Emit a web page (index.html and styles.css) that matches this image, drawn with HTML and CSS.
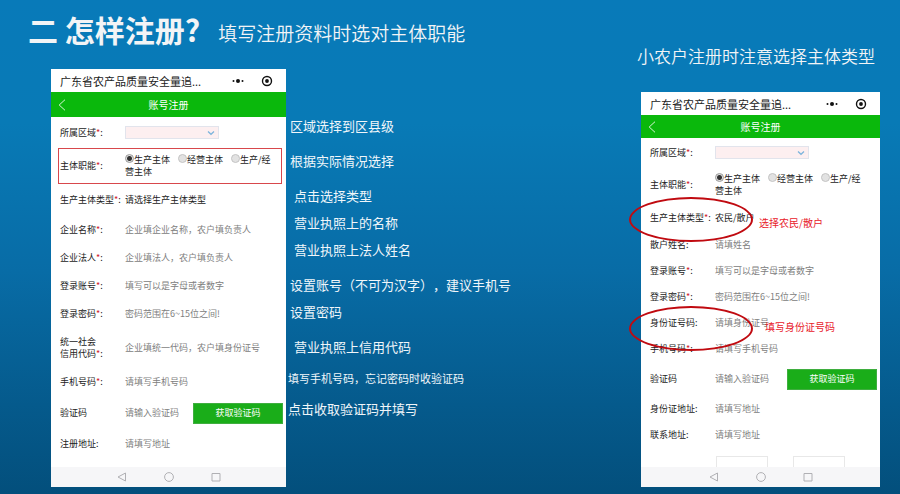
FILE: index.html
```html
<!DOCTYPE html>
<html lang="zh-CN">
<head>
    <meta charset="UTF-8">
    <meta name="viewport" content="width=device-width, initial-scale=1.0">
    <title>怎样注册</title>
    <link rel="stylesheet" href="styles.css">
</head>
<body>
    <main class="slide">
        <section class="guide">
            <header class="heading">
                <h1>二 怎样注册?</h1>
                <p>填写注册资料时选对主体职能</p>
            </header>

            <div class="guide-body">
                <div class="phone">
                    <div class="status">
                        <span class="app-name">广东省农产品质量安全量追...</span>
                        <svg class="dots" viewBox="0 0 12 12"><circle cx="1.5" cy="6" r="1"/><circle cx="6" cy="6" r="2"/><circle cx="10.5" cy="6" r="1"/></svg>
                        <svg class="target" viewBox="0 0 12 12"><circle cx="6" cy="6" r="4.5" fill="none" stroke="#111" stroke-width="1.4"/><circle cx="6" cy="6" r="1.9"/></svg>
                    </div>
                    <div class="topbar">
                        <svg class="back" viewBox="0 0 8 12"><path d="M7 .7 1.2 6 7 11.3"/></svg>
                        <h2>账号注册</h2>
                    </div>
                    <form class="form">
                        <div class="row row-area">
                            <label for="area1">所属区域<i>*</i>:</label>
                            <div class="picker">
                                <select id="area1"><option></option></select>
                                <svg viewBox="0 0 8 6"><path d="M1 1.5 4 4.3 7 1.5"/></svg>
                            </div>
                        </div>
                        <div class="row row-role marked">
                            <span class="label">主体职能<i>*</i>:</span>
                            <div class="radios">
                                <label><input type="radio" name="role1" checked>生产主体</label>
                                <label><input type="radio" name="role1">经营主体</label>
                                <label><input type="radio" name="role1">生产/经营主体</label>
                            </div>
                        </div>
                        <div class="row row-type">
                            <label for="type1">生产主体类型<i>*</i>:</label>
                            <select id="type1" class="plain"><option>请选择生产主体类型</option></select>
                        </div>
                        <div class="row">
                            <label for="company">企业名称<i>*</i>:</label>
                            <input type="text" id="company" placeholder="企业填企业名称，农户填负责人">
                        </div>
                        <div class="row">
                            <label for="legal">企业法人<i>*</i>:</label>
                            <input type="text" id="legal" placeholder="企业填法人，农户填负责人">
                        </div>
                        <div class="row">
                            <label for="account1">登录账号<i>*</i>:</label>
                            <input type="text" id="account1" placeholder="填写可以是字母或者数字">
                        </div>
                        <div class="row">
                            <label for="pwd1">登录密码<i>*</i>:</label>
                            <input type="password" id="pwd1" placeholder="密码范围在6~15位之间!">
                        </div>
                        <div class="row row-credit">
                            <label for="credit">统一社会<br>信用代码<i>*</i>:</label>
                            <input type="text" id="credit" placeholder="企业填统一代码，农户填身份证号">
                        </div>
                        <div class="row">
                            <label for="phone1">手机号码<i>*</i>:</label>
                            <input type="tel" id="phone1" placeholder="请填写手机号码">
                        </div>
                        <div class="row row-code">
                            <label for="code1">验证码</label>
                            <input type="text" id="code1" placeholder="请输入验证码">
                            <button type="button">获取验证码</button>
                        </div>
                        <div class="row">
                            <label for="address1">注册地址:</label>
                            <input type="text" id="address1" placeholder="请填写地址">
                        </div>
                    </form>
                    <div class="navbar">
                        <svg viewBox="0 0 10 10"><path d="M8.5 1v8L1 5z"/></svg>
                        <svg viewBox="0 0 10 10"><circle cx="5" cy="5" r="4.4"/></svg>
                        <svg viewBox="0 0 10 10"><path d="M1 1.5h8v7.5H1z"/></svg>
                    </div>
                </div>

                <ul class="notes">
                    <li>区域选择到区县级</li>
                    <li class="far">根据实际情况选择</li>
                    <li class="far indent">点击选择类型</li>
                    <li class="indent">营业执照上的名称</li>
                    <li class="indent">营业执照上法人姓名</li>
                    <li class="far">设置账号（不可为汉字），建议手机号</li>
                    <li>设置密码</li>
                    <li class="far indent">营业执照上信用代码</li>
                    <li class="near small">填写手机号码，忘记密码时收验证码</li>
                    <li class="near">点击收取验证码并填写</li>
                </ul>
            </div>
        </section>

        <section class="farmer">
            <h2 class="farmer-title">小农户注册时注意选择主体类型</h2>

            <div class="phone phone-farmer">
                <div class="status">
                    <span class="app-name">广东省农产品质量安全量追...</span>
                    <svg class="dots" viewBox="0 0 12 12"><circle cx="1.5" cy="6" r="1"/><circle cx="6" cy="6" r="2"/><circle cx="10.5" cy="6" r="1"/></svg>
                    <svg class="target" viewBox="0 0 12 12"><circle cx="6" cy="6" r="4.5" fill="none" stroke="#111" stroke-width="1.4"/><circle cx="6" cy="6" r="1.9"/></svg>
                </div>
                <div class="topbar">
                    <svg class="back" viewBox="0 0 8 12"><path d="M7 .7 1.2 6 7 11.3"/></svg>
                    <h2>账号注册</h2>
                </div>
                <form class="form">
                    <div class="row row-area">
                        <label for="area2">所属区域<i>*</i>:</label>
                        <div class="picker">
                            <select id="area2"><option></option></select>
                            <svg viewBox="0 0 8 6"><path d="M1 1.5 4 4.3 7 1.5"/></svg>
                        </div>
                    </div>
                    <div class="row row-role">
                        <span class="label">主体职能<i>*</i>:</span>
                        <div class="radios">
                            <label><input type="radio" name="role2" checked>生产主体</label>
                            <label><input type="radio" name="role2">经营主体</label>
                            <label><input type="radio" name="role2">生产/经营主体</label>
                        </div>
                    </div>
                    <div class="row row-type">
                        <label for="type2">生产主体类型<i>*</i>:</label>
                        <select id="type2" class="plain"><option>农民/散户</option></select>
                        <span class="ring"></span>
                        <span class="callout">选择农民/散户</span>
                    </div>
                    <div class="row">
                        <label for="name2">散户姓名:</label>
                        <input type="text" id="name2" placeholder="请填姓名">
                    </div>
                    <div class="row">
                        <label for="account2">登录账号<i>*</i>:</label>
                        <input type="text" id="account2" placeholder="填写可以是字母或者数字">
                    </div>
                    <div class="row">
                        <label for="pwd2">登录密码<i>*</i>:</label>
                        <input type="password" id="pwd2" placeholder="密码范围在6~15位之间!">
                    </div>
                    <div class="row row-id">
                        <label for="idcard">身份证号码:</label>
                        <input type="text" id="idcard" placeholder="请填身份证号">
                        <span class="ring"></span>
                        <span class="callout">填写身份证号码</span>
                    </div>
                    <div class="row">
                        <label for="phone2">手机号码<i>*</i>:</label>
                        <input type="tel" id="phone2" placeholder="请填写手机号码">
                    </div>
                    <div class="row row-code">
                        <label for="code2">验证码</label>
                        <input type="text" id="code2" placeholder="请输入验证码">
                        <button type="button">获取验证码</button>
                    </div>
                    <div class="row">
                        <label for="idaddress">身份证地址:</label>
                        <input type="text" id="idaddress" placeholder="请填写地址">
                    </div>
                    <div class="row">
                        <label for="address2">联系地址:</label>
                        <input type="text" id="address2" placeholder="请填写地址">
                    </div>
                    <div class="uploads">
                        <span></span>
                        <span></span>
                    </div>
                </form>
                <div class="navbar">
                    <svg viewBox="0 0 10 10"><path d="M8.5 1v8L1 5z"/></svg>
                    <svg viewBox="0 0 10 10"><circle cx="5" cy="5" r="4.4"/></svg>
                    <svg viewBox="0 0 10 10"><path d="M1 1.5h8v7.5H1z"/></svg>
                </div>
            </div>
        </section>
    </main>
</body>
</html>
```
FILE: styles.css
```css
* {
    box-sizing: border-box;
}
body {
    margin: 0;
    font-family: "Noto Sans CJK SC", sans-serif;
    color: #222;
    text-spacing-trim: space-all;
}
h1, h2, p, ul {
    margin: 0;
    padding: 0;
    font-weight: normal;
}
i {
    font-style: normal;
    color: #d0202a;
}
.slide {
    min-height: 100vh;
    display: flex;
    justify-content: space-between;
    padding: 0 20px 7px 28px;
    background: linear-gradient(#087ab9 0%, #087ab6 25%, #086ca6 55%, #055a8c 82%, #034f7c 100%);
}

/* left part */
.guide {
    display: flex;
    flex-direction: column;
    padding-top: 9px;
}
.heading {
    display: flex;
    align-items: flex-start;
    gap: 18px;
    height: 60px;
    color: #f2f4f6;
    white-space: nowrap;
}
.heading h1 {
    font-size: 30px;
    line-height: 40px;
    font-weight: bold;
}
.heading p {
    font-size: 19px;
    line-height: 48px;
    font-weight: 350;
}
.guide-body {
    flex: 1;
    display: flex;
    padding-left: 23px;
}
.notes {
    list-style: none;
    padding: 47px 0 0 2px;
    color: #f0f6fa;
    font-size: 13px;
    line-height: 20px;
    white-space: nowrap;
}
.notes li {
    margin-top: 7px;
    padding-left: 2px;
}
.notes li:first-child {
    margin-top: 0;
}
.notes .far {
    margin-top: 15px;
}
.notes .indent {
    padding-left: 6px;
}
.notes .near {
    margin-top: 11px;
    padding-left: 0;
}
.notes .small {
    font-size: 11px;
}

/* right part */
.farmer {
    display: flex;
    flex-direction: column;
    padding-top: 44px;
}
.farmer-title {
    margin-bottom: 24px;
    color: #f2f4f6;
    font-size: 17px;
    line-height: 24px;
    font-weight: 350;
    white-space: nowrap;
}

/* phone */
.phone {
    --row: 28px;
    flex: none;
    display: flex;
    flex-direction: column;
    width: 235px;
    background: #fff;
    font-size: 9px;
    line-height: 12px;
}
.status {
    display: flex;
    align-items: center;
    height: 23px;
    padding: 0 13px 0 9px;
}
.app-name {
    flex: 1;
    font-size: 11px;
    white-space: nowrap;
}
.status svg {
    width: 12px;
    height: 12px;
    fill: #111;
}
.status .dots {
    margin-right: 17px;
}
.topbar {
    display: grid;
    grid-template-columns: 20px 1fr 20px;
    align-items: center;
    height: 25px;
    background: #0ab80c;
    color: #fff;
}
.topbar h2 {
    font-size: 10px;
    text-align: center;
}
.back {
    width: 8px;
    height: 12px;
    margin-left: 7px;
    fill: none;
    stroke: #d5f5d5;
}
.form {
    flex: 1;
    display: flex;
    flex-direction: column;
}
.row {
    position: relative;
    display: flex;
    align-items: center;
    min-height: var(--row);
    padding: 0 3px 0 9px;
}
.row > label,
.row > .label {
    flex: none;
    width: 65px;
    white-space: nowrap;
}
.row-area {
    min-height: 31px;
}
.row-role {
    min-height: 36px;
}
.row-type {
    min-height: 32px;
}
.row-credit {
    min-height: 40px;
}
.row-code {
    min-height: 34px;
}
.row.marked {
    margin: 0 4px 0 7px;
    padding: 0 0 0 1px;
    border: 1px solid #d8474c;
}
.form input,
.form select {
    font: inherit;
    color: inherit;
}
.row > input,
.plain {
    flex: 1;
    width: 100%;
    min-width: 0;
    padding: 0;
    border: none;
    background: none;
    appearance: none;
}
.form input::placeholder {
    color: #808080;
}
.picker {
    display: flex;
    align-items: center;
    width: 94px;
    height: 13px;
    padding-right: 3px;
    border: 1px solid #e2e4ec;
    background: #fdeff0;
}
.picker select {
    flex: 1;
    height: 100%;
    padding: 0;
    border: none;
    background: none;
    appearance: none;
}
.picker svg {
    width: 8px;
    height: 6px;
    fill: none;
    stroke: #7db4dc;
    stroke-width: 1.3;
}
.radios {
    width: 152px;
}
.radios label {
    margin-right: 6px;
}
.radios input {
    appearance: none;
    width: 9px;
    height: 9px;
    margin: 0;
    border: 1px solid #c4c4c4;
    border-radius: 50%;
    background: #e2e2e2;
}
.radios input:checked {
    border-color: #999;
    background: radial-gradient(circle, #333 0 2px, #e2e2e2 3px);
}
.row button {
    width: 90px;
    height: 21px;
    padding: 0;
    border: 1px solid #3fae3f;
    background: #1aad19;
    color: #fff;
    font: inherit;
}
.navbar {
    display: flex;
    justify-content: center;
    align-items: center;
    gap: 37px;
    height: 20px;
    background: #f6f6f8;
}
.navbar svg {
    width: 10px;
    height: 10px;
    fill: none;
    stroke: #b0b0b4;
}

/* phone of the small farmer */
.phone-farmer {
    --row: 26px;
    flex: 1;
    width: 239px;
    margin-left: 4px;
}
.phone-farmer .topbar {
    height: 23px;
}
.phone-farmer .row-area,
.phone-farmer .row-type {
    min-height: 29px;
}
.uploads {
    flex: 1;
    display: flex;
    gap: 25px;
    padding: 8px 0 0 75px;
}
.uploads span {
    width: 52px;
    border: 1px solid #e8e8e8;
    border-bottom: none;
}

/* marks drawn over the form */
.ring {
    position: absolute;
    left: -12px;
    top: -6px;
    width: 124px;
    height: 45px;
    border: 2px solid #c00a10;
    border-radius: 50%;
    pointer-events: none;
    z-index: 1;
}
.callout {
    position: absolute;
    left: 118px;
    top: 14px;
    color: #e8202a;
    font-size: 10px;
    white-space: nowrap;
}
.row-id .ring {
    top: -4px;
}
.row-id .callout {
    left: 124px;
    top: 11px;
}
```
